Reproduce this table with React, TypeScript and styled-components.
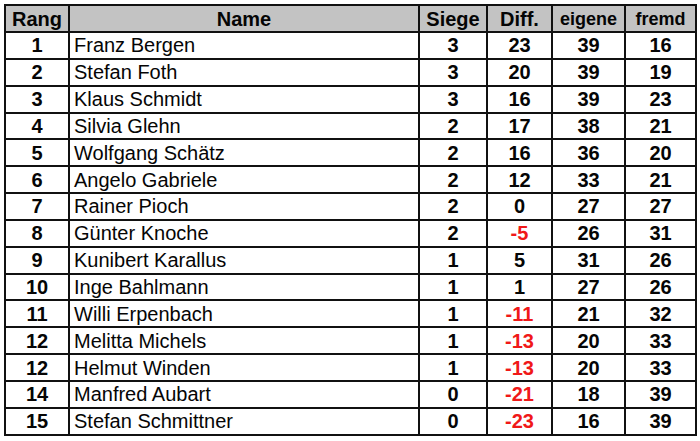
import React from "react";
import styled, { createGlobalStyle } from "styled-components";

const Global = createGlobalStyle`
  html, body { margin: 0; padding: 0; background: #fff; }
  body { font-family: "Liberation Sans", Arial, sans-serif; }
`;

const Page = styled.div`
  padding: 4px 0 0 4px;
`;

const Table = styled.table`
  border-collapse: collapse;
  table-layout: fixed;
  width: 693px;
  color: #050505;
  font-size: 20px;
`;

const HeadCell = styled.th<{ $w: number; $small?: boolean }>`
  width: ${(p) => p.$w}px;
  background: #c3c3c3;
  border: 2px solid #111;
  font-weight: bold;
  font-size: ${(p) => (p.$small ? "18px" : "20px")};
  text-align: center;
  height: 25px;
  padding: 0;
  line-height: 1;
`;

const Cell = styled.td<{ $bold?: boolean; $left?: boolean; $neg?: boolean }>`
  border: 2px solid #111;
  height: 24.85px;
  padding: 0 ${(p) => (p.$left ? "4px" : "0")};
  font-size: 20px;
  line-height: 1;
  text-align: ${(p) => (p.$left ? "left" : "center")};
  font-weight: ${(p) => (p.$bold ? "bold" : "normal")};
  color: ${(p) => (p.$neg ? "#f01818" : "#050505")};
  white-space: nowrap;
`;

type Row = [string, string, number, number, number, number];

const rows: Row[] = [
  ["1", "Franz Bergen", 3, 23, 39, 16],
  ["2", "Stefan Foth", 3, 20, 39, 19],
  ["3", "Klaus Schmidt", 3, 16, 39, 23],
  ["4", "Silvia Glehn", 2, 17, 38, 21],
  ["5", "Wolfgang Schätz", 2, 16, 36, 20],
  ["6", "Angelo Gabriele", 2, 12, 33, 21],
  ["7", "Rainer Pioch", 2, 0, 27, 27],
  ["8", "Günter Knoche", 2, -5, 26, 31],
  ["9", "Kunibert Karallus", 1, 5, 31, 26],
  ["10", "Inge Bahlmann", 1, 1, 27, 26],
  ["11", "Willi Erpenbach", 1, -11, 21, 32],
  ["12", "Melitta Michels", 1, -13, 20, 33],
  ["12", "Helmut Winden", 1, -13, 20, 33],
  ["14", "Manfred Aubart", 0, -21, 18, 39],
  ["15", "Stefan Schmittner", 0, -23, 16, 39],
];

const cols: [string, number, boolean][] = [
  ["Rang", 62, false],
  ["Name", 348, false],
  ["Siege", 66, false],
  ["Diff.", 63, false],
  ["eigene", 71, true],
  ["fremd", 69, true],
];

export default function App() {
  return (
    <Page>
      <Global />
      <Table>
        <thead>
          <tr>
            {cols.map(([label, w, small]) => (
              <HeadCell key={label} $w={w} $small={small}>
                {label}
              </HeadCell>
            ))}
          </tr>
        </thead>
        <tbody>
          {rows.map(([rang, name, siege, diff, eig, fremd], i) => (
            <tr key={i}>
              <Cell $bold>{rang}</Cell>
              <Cell $left>{name}</Cell>
              <Cell $bold>{siege}</Cell>
              <Cell $bold $neg={diff < 0}>{diff}</Cell>
              <Cell $bold>{eig}</Cell>
              <Cell $bold>{fremd}</Cell>
            </tr>
          ))}
        </tbody>
      </Table>
    </Page>
  );
}
